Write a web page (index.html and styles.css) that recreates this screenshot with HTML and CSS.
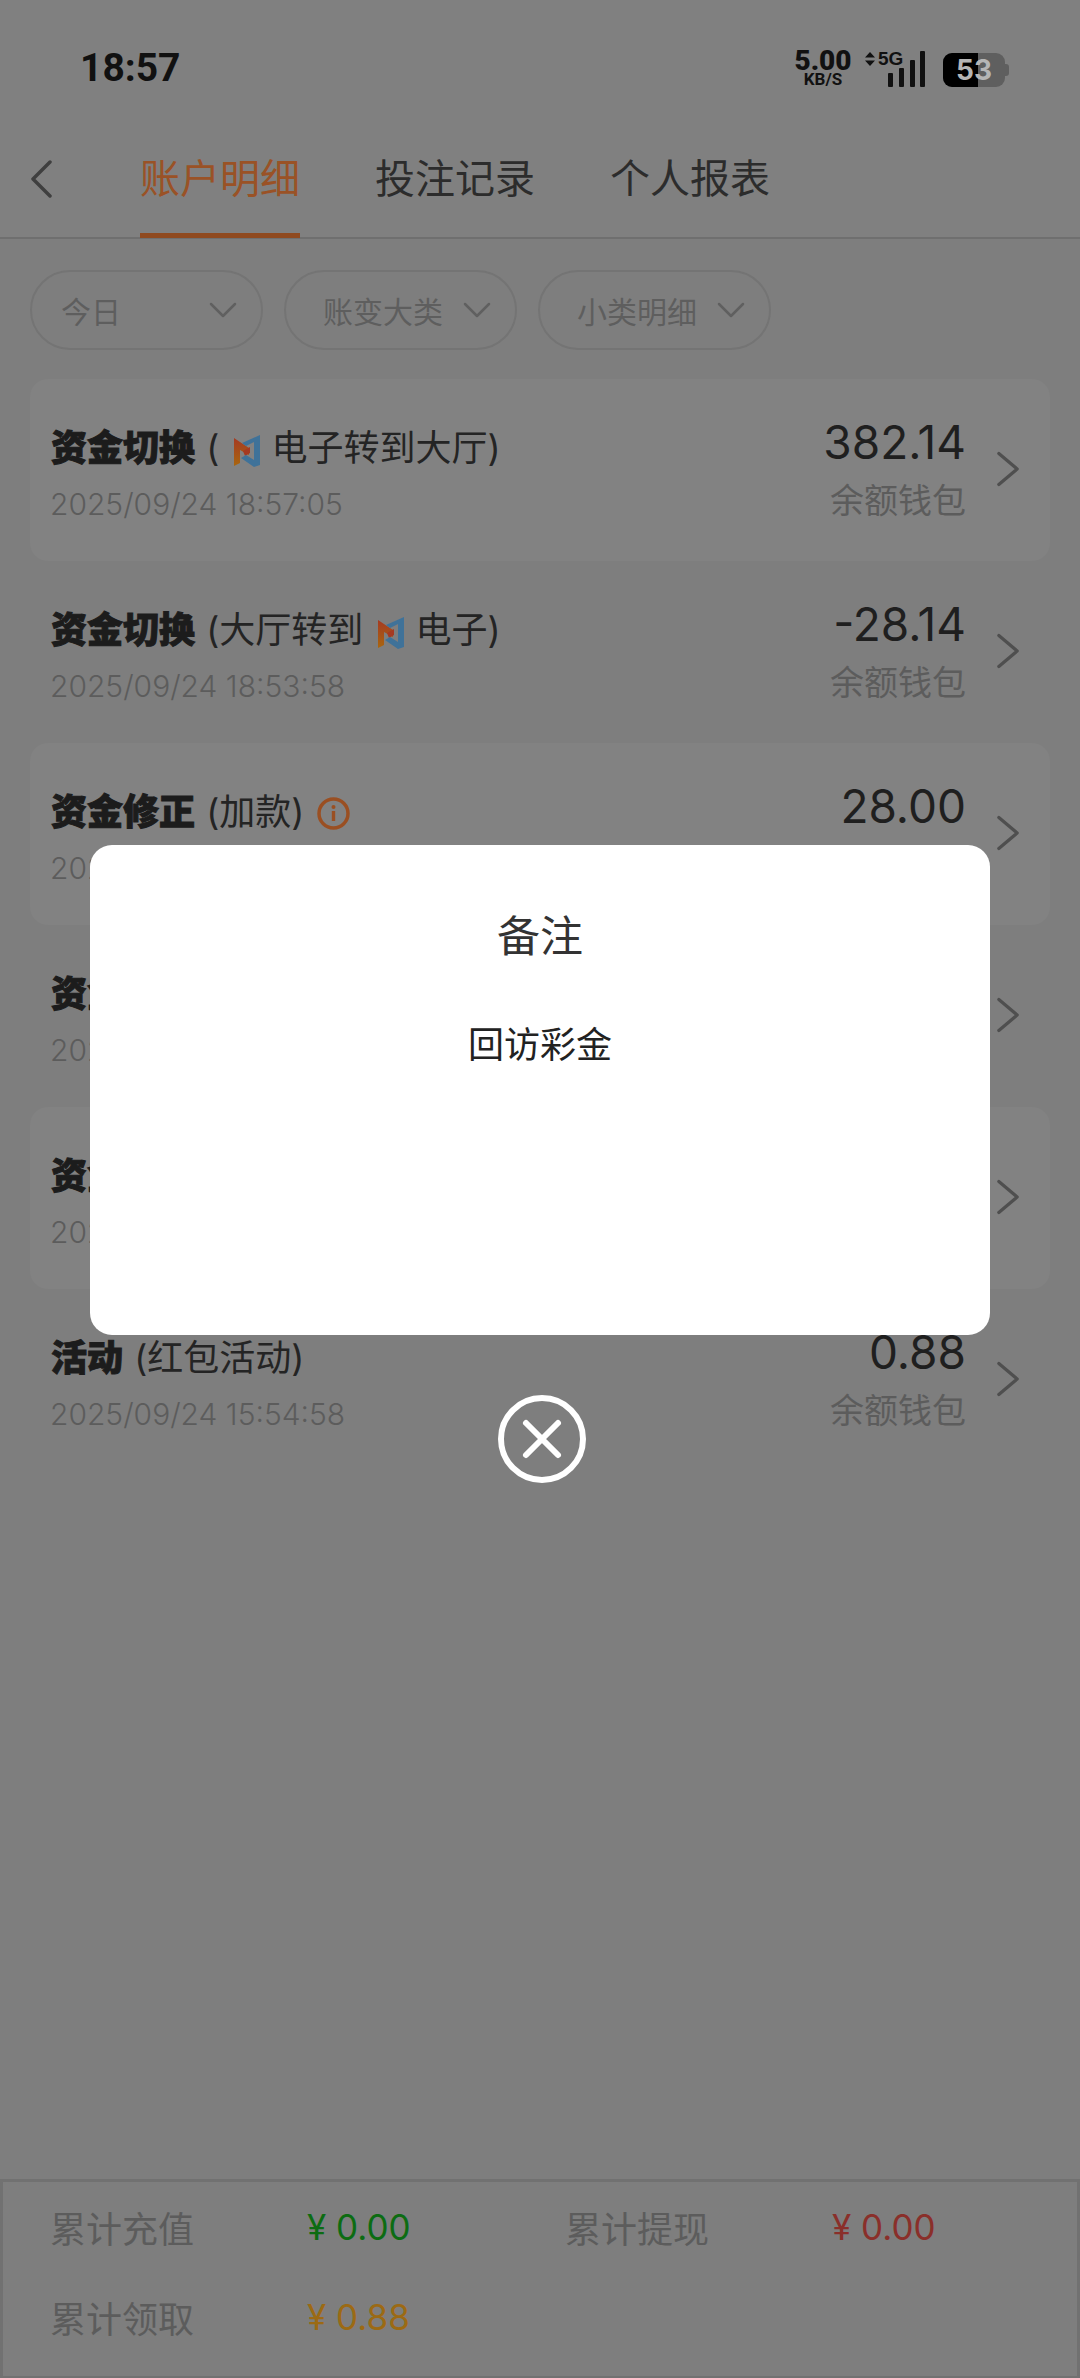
FILE: index.html
```html
<!DOCTYPE html>
<html lang="zh-CN">
<head>
  <meta charset="UTF-8">
  <meta name="viewport" content="width=device-width, initial-scale=1.0">
  <title>账户明细</title>
  <link rel="stylesheet" href="styles.css">
</head>
<body>
  <div class="page">
    <div class="status">
      <span class="time">18:57</span>
      <div class="status-right">
        <div class="speed"><b>5.00</b><small>KB/S</small></div>
        <div class="signal">
          <span class="net"><i class="arrows"></i>5G</span>
          <svg width="37" height="36" viewBox="0 0 37 36"><g fill="#111"><rect x="0" y="22" width="5" height="14" rx="1"/><rect x="11" y="17" width="5" height="19" rx="1"/><rect x="22" y="9" width="5" height="27" rx="1"/><rect x="32" y="0" width="5" height="36" rx="1"/></g></svg>
        </div>
        <div class="battery"><span class="level"></span><span class="percent">53</span><span class="nub"></span></div>
      </div>
    </div>

    <div class="tabs">
      <svg class="back" width="24" height="38" viewBox="0 0 24 38"><path d="M21 2 L4 19 L21 36" fill="none" stroke="#3f3f3f" stroke-width="3.500" stroke-linecap="round" stroke-linejoin="round"/></svg>
      <a class="tab active">账户明细</a>
      <a class="tab">投注记录</a>
      <a class="tab">个人报表</a>
    </div>

    <div class="filters">
      <div class="pill pill-short"><span>今日</span><svg width="28" height="16" viewBox="0 0 28 16"><path d="M2 2 L14 14 L26 2" fill="none" stroke="#606060" stroke-width="2.500" stroke-linecap="round" stroke-linejoin="round"/></svg></div>
      <div class="pill"><span>账变大类</span><svg width="28" height="16" viewBox="0 0 28 16"><path d="M2 2 L14 14 L26 2" fill="none" stroke="#606060" stroke-width="2.500" stroke-linecap="round" stroke-linejoin="round"/></svg></div>
      <div class="pill"><span>小类明细</span><svg width="28" height="16" viewBox="0 0 28 16"><path d="M2 2 L14 14 L26 2" fill="none" stroke="#606060" stroke-width="2.500" stroke-linecap="round" stroke-linejoin="round"/></svg></div>
    </div>

    <svg width="0" height="0" class="defs">
      <defs>
        <linearGradient id="logo-left" x1="0" y1="0" x2="0" y2="1"><stop offset="0" stop-color="#a53a22"/><stop offset="1" stop-color="#a8660f"/></linearGradient>
        <symbol id="logo" viewBox="0 0 26 32">
          <path d="M0 3 L15 13 L15 20 L6 15 L6 28 L0 31 Z" fill="url(#logo-left)"/>
          <path d="M9 16 L16 12 L16 18 L11 21 Z" fill="#a53a22"/>
          <path d="M26 0 L26 30 L20 32 L7 23 L12 20 L20 25 L20 7 L12 11 L8 8 Z" fill="#3f7299"/>
        </symbol>
        <symbol id="arrow" viewBox="0 0 24 38">
          <path d="M2 2 L22 19 L2 36" fill="none" stroke="#4f4f4f" stroke-width="3.500" stroke-linecap="round" stroke-linejoin="round"/>
        </symbol>
      </defs>
    </svg>

    <div class="list">
      <div class="row">
        <div class="info">
          <div class="title"><b>资金切换</b> ( <svg class="logo" width="26" height="32"><use href="#logo"/></svg> 电子转到大厅)</div>
          <div class="date">2025/09/24 18:57:05</div>
        </div>
        <div class="money"><div class="amount">382.14</div><div class="wallet">余额钱包</div></div>
        <svg class="more" width="22" height="36"><use href="#arrow"/></svg>
      </div>
      <div class="row">
        <div class="info">
          <div class="title"><b>资金切换</b> (大厅转到 <svg class="logo" width="26" height="32"><use href="#logo"/></svg> 电子)</div>
          <div class="date">2025/09/24 18:53:58</div>
        </div>
        <div class="money"><div class="amount">-28.14</div><div class="wallet">余额钱包</div></div>
        <svg class="more" width="22" height="36"><use href="#arrow"/></svg>
      </div>
      <div class="row">
        <div class="info">
          <div class="title"><b>资金修正</b> (加款) <svg class="tip" width="33" height="33" viewBox="0 0 33 33"><circle cx="16.500" cy="16.500" r="14.500" fill="none" stroke="#9a4f22" stroke-width="3.500"/><rect x="14.800" y="14" width="3.400" height="10" fill="#9a4f22"/><circle cx="16.500" cy="10" r="2" fill="#9a4f22"/></svg></div>
          <div class="date">2025/09/24 18:40:12</div>
        </div>
        <div class="money"><div class="amount">28.00</div><div class="wallet">余额钱包</div></div>
        <svg class="more" width="22" height="36"><use href="#arrow"/></svg>
      </div>
      <div class="row">
        <div class="info">
          <div class="title"><b>资金切换</b></div>
          <div class="date">2025/09/24 18:20:31</div>
        </div>
        <div class="money"><div class="amount">0.00</div><div class="wallet">余额钱包</div></div>
        <svg class="more" width="22" height="36"><use href="#arrow"/></svg>
      </div>
      <div class="row">
        <div class="info">
          <div class="title"><b>资金切换</b></div>
          <div class="date">2025/09/24 16:02:47</div>
        </div>
        <div class="money"><div class="amount">0.00</div><div class="wallet">余额钱包</div></div>
        <svg class="more" width="22" height="36"><use href="#arrow"/></svg>
      </div>
      <div class="row">
        <div class="info">
          <div class="title"><b>活动</b> (红包活动)</div>
          <div class="date">2025/09/24 15:54:58</div>
        </div>
        <div class="money"><div class="amount">0.88</div><div class="wallet">余额钱包</div></div>
        <svg class="more" width="22" height="36"><use href="#arrow"/></svg>
      </div>
    </div>

    <div class="summary">
      <span class="label">累计充值</span><span class="val green">¥ 0.00</span>
      <span class="label">累计提现</span><span class="val red">¥ 0.00</span>
      <span class="label">累计领取</span><span class="val gold">¥ 0.88</span>
    </div>

    <div class="popup">
      <div class="dialog">
        <h2>备注</h2>
        <p>回访彩金</p>
      </div>
      <svg class="close" width="88" height="88" viewBox="0 0 88 88"><circle cx="44" cy="44" r="41" fill="none" stroke="#fff" stroke-width="6"/><path d="M28 28 L60 60 M60 28 L28 60" stroke="#fff" stroke-width="6" stroke-linecap="round"/></svg>
    </div>
  </div>
</body>
</html>
```

FILE: styles.css
```css
* {
  box-sizing: border-box;
  margin: 0;
  padding: 0;
}

body {
  font-family: Inter, 'Noto Sans CJK SC', sans-serif;
  background: #7e7e7e;
  color: #222;
}

.page {
  position: relative;
  width: 1080px;
  height: 2378px;
  display: flex;
  flex-direction: column;
  background: #7e7e7e;
  overflow: hidden;
}

.defs {
  position: absolute;
}

/* status bar */
.status {
  height: 137px;
  padding: 50px 71px 0 80px;
  display: flex;
  justify-content: space-between;
  align-items: flex-start;
  background: #808080;
}

.time {
  font-family: Roboto, sans-serif;
  font-size: 39px;
  font-weight: 700;
  line-height: 36px;
  color: #111;
}

.status-right {
  display: flex;
  align-items: flex-start;
}

.speed {
  width: 62px;
  display: flex;
  flex-direction: column;
  align-items: center;
  font-family: Roboto, sans-serif;
  color: #111;
  font-weight: 700;
  line-height: 1;
}

.speed b {
  font-size: 28px;
  line-height: 22px;
}

.speed small {
  font-size: 17px;
  line-height: 15px;
}

.signal {
  position: relative;
  width: 70px;
  height: 36px;
  margin: 1px 0 0 1px;
  display: flex;
  justify-content: flex-end;
}

.net {
  position: absolute;
  left: 10px;
  top: 0;
  display: flex;
  align-items: center;
  gap: 3px;
  font-family: 'Liberation Sans', sans-serif;
  font-size: 19px;
  font-weight: 700;
  line-height: 16px;
  color: #111;
}

.arrows {
  width: 10px;
  height: 14px;
  background: #111;
  clip-path: polygon(50% 0, 100% 40%, 0 40%, 0 60%, 100% 60%, 50% 100%, 0 60%, 0 40%);
}

.battery {
  position: relative;
  width: 62px;
  height: 34px;
  margin: 3px 4px 0 18px;
  border-radius: 9px;
  background: #5f5f5f;
}

.level {
  position: absolute;
  left: 0;
  top: 0;
  width: 35px;
  height: 34px;
  background: #000;
  border-radius: 9px 0 0 9px;
}

.percent {
  position: absolute;
  left: 13px;
  top: 0;
  font-size: 28px;
  font-weight: 700;
  line-height: 34px;
  color: #b5b5b5;
}

.nub {
  position: absolute;
  right: -4px;
  top: 11px;
  width: 4px;
  height: 12px;
  background: #5f5f5f;
  border-radius: 0 3px 3px 0;
}

/* tabs */
.tabs {
  height: 102px;
  padding-left: 29px;
  display: flex;
  align-items: flex-start;
  background: #808080;
  border-bottom: 2px solid #6f6f6f;
}

.back {
  margin-top: 23px;
  margin-right: 87px;
}

.tab {
  width: 160px;
  height: 101px;
  margin-right: 75px;
  text-align: center;
  font-size: 40px;
  line-height: 84px;
  color: #2c2c2c;
}

.tab.active {
  color: #9a5226;
  border-bottom: 5px solid #8f4a20;
}

/* filters */
.filters {
  padding: 31px 0 0 30px;
  height: 140px;
  display: flex;
  gap: 21px;
}

.pill {
  width: 233px;
  height: 80px;
  padding: 0 24px 0 37px;
  display: flex;
  justify-content: space-between;
  align-items: center;
  border: 2px solid #747474;
  border-radius: 40px;
  font-size: 30px;
  color: #5e5e5e;
}

.pill-short {
  padding-left: 29px;
}

/* list */
.list {
  margin: 0 30px;
}

.row {
  height: 182px;
  padding: 0 31px 0 21px;
  display: flex;
  align-items: flex-start;
  border-radius: 18px;
}

.row:nth-child(odd) {
  background: #828282;
}

.info {
  flex: 1;
  padding-top: 44px;
}

.title {
  height: 50px;
  font-size: 36px;
  line-height: 50px;
  color: #242424;
  white-space: nowrap;
}

.title b {
  margin-right: 1px;
  font-weight: 900;
  color: #1c1c1c;
  -webkit-text-stroke: 1px #1c1c1c;
}

.logo {
  margin: 0 1px 0 5px;
  vertical-align: -6px;
}

.tip {
  margin-left: 2px;
  vertical-align: -5px;
}

.date {
  margin-top: 12px;
  margin-left: -1px;
  font-size: 30px;
  font-weight: 300;
  line-height: 38px;
  color: #5c5c5c;
}

.money {
  padding-top: 36px;
  text-align: right;
}

.amount {
  font-size: 46px;
  font-weight: 400;
  line-height: 54px;
  color: #1f1f1f;
}

.wallet {
  margin-top: 8px;
  font-size: 34px;
  line-height: 48px;
  color: #5c5c5c;
}

.more {
  margin: 72px 0 0 31px;
}

/* summary */
.summary {
  margin-top: auto;
  height: 199px;
  padding: 0 0 9px 47px;
  display: grid;
  grid-template-columns: 257px 258px 267px 1fr;
  grid-auto-rows: 90px;
  align-items: center;
  border: 3px solid #717171;
  border-bottom-width: 2px;
}

.label {
  font-size: 36px;
  color: #5c5c5c;
}

.val {
  font-size: 35px;
  font-weight: 400;
}

.green {
  color: #0c6c12;
}

.red {
  color: #8a2f2a;
}

.gold {
  color: #9c6a14;
}

/* remark popup */
.popup {
  position: absolute;
  left: 90px;
  top: 845px;
  width: 900px;
  display: flex;
  flex-direction: column;
  align-items: center;
}

.dialog {
  width: 100%;
  height: 490px;
  padding-top: 59px;
  background: #fff;
  border-radius: 22px;
  text-align: center;
}

.dialog h2 {
  font-size: 43px;
  font-weight: 400;
  line-height: 64px;
  color: #333;
}

.dialog p {
  margin-top: 52px;
  font-size: 36px;
  line-height: 50px;
  color: #222;
}

.close {
  margin-top: 60px;
  margin-left: 3px;
}
```
